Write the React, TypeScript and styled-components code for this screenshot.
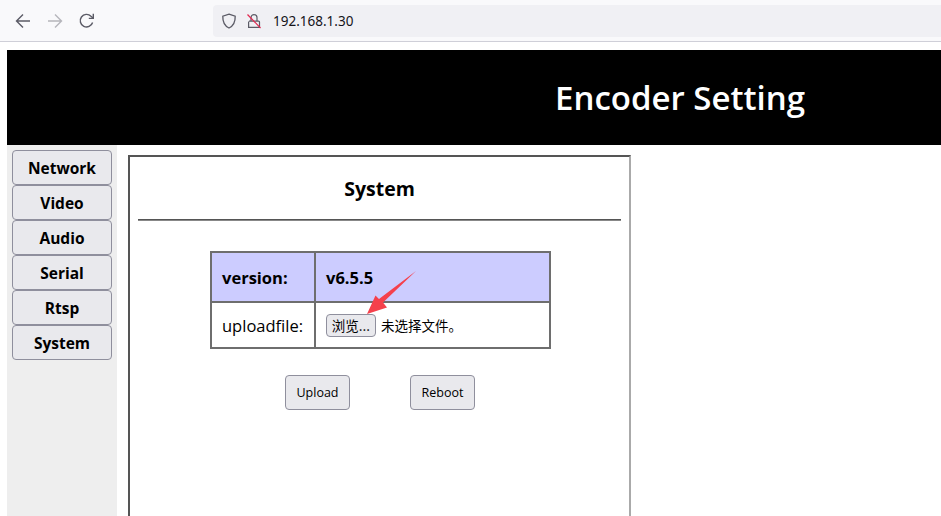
import styled, { createGlobalStyle } from 'styled-components'

const GlobalStyle = createGlobalStyle`
  html, body {
    margin: 0;
    padding: 0;
    height: 100%;
    background: #fff;
    overflow: hidden;
  }
  body {
    font-family: "Open Sans", "Noto Sans", "Noto Sans CJK SC", sans-serif;
    color: #000;
  }
`

const Window = styled.div`
  width: 941px;
  height: 516px;
  display: flex;
  flex-direction: column;
  overflow: hidden;
`

const Toolbar = styled.div`
  height: 41px;
  flex: none;
  box-sizing: content-box;
  display: flex;
  align-items: center;
  background: #f9f9fb;
  border-bottom: 1px solid #cfcfd8;
`

const NavIcons = styled.div`
  width: 213px;
  flex: none;
  display: flex;
  align-items: center;
  gap: 14px;
  padding-left: 14px;
  box-sizing: border-box;
`

const UrlBar = styled.div`
  flex: 1;
  height: 32px;
  display: flex;
  align-items: center;
  gap: 9px;
  padding-left: 8px;
  background: #f0f0f4;
  border-radius: 4px 0 0 4px;
`

const UrlText = styled.span`
  font-family: "Noto Sans", sans-serif;
  font-size: 13.5px;
  color: #15141a;
  margin-left: 2px;
`

const Page = styled.div`
  flex: 1;
  min-height: 0;
  padding: 8px 0 0 7px;
  display: flex;
  flex-direction: column;
`

const Banner = styled.header`
  height: 95px;
  flex: none;
  background: #000;
  display: flex;
  align-items: center;
  padding-left: 548px;
`

const BannerTitle = styled.h1`
  margin: 0;
  font-size: 33px;
  font-weight: 600;
  color: #fff;
  white-space: nowrap;
`

const Body = styled.div`
  flex: 1;
  min-height: 0;
  display: flex;
`

const Sidebar = styled.nav`
  width: 110px;
  flex: none;
  box-sizing: border-box;
  background: #eee;
  padding: 5px;
  display: flex;
  flex-direction: column;
`

const NavButton = styled.button`
  width: 100px;
  height: 35px;
  padding: 0;
  background: #e9e9ed;
  border: 1px solid #8f8f9d;
  border-radius: 4px;
  font-family: inherit;
  font-size: 15.5px;
  font-weight: 700;
  color: #000;
`

const Panel = styled.main`
  margin: 10px 0 0 11px;
  width: 503px;
  height: 400px;
  flex: none;
  box-sizing: border-box;
  border: 2px solid;
  border-color: #555 #aaa #aaa #555;
  padding: 0 8px;
  position: relative;
`

const PanelTitle = styled.h2`
  margin: 0;
  height: 62px;
  display: flex;
  align-items: center;
  justify-content: center;
  font-size: 19.5px;
  font-weight: 700;
`

const Rule = styled.div`
  height: 2px;
  background: linear-gradient(#555 50%, #888 50%);
  margin-bottom: 30px;
`

const InfoTable = styled.div`
  width: 341px;
  margin: 0 0 26px 72px;
  box-sizing: border-box;
  border: 2px solid;
  border-color: #6e6e6e;
  display: grid;
  grid-template-columns: 102px 1fr;
  grid-template-rows: 50px 44px;
`

const Cell = styled.div<{ $head?: boolean; $left?: boolean }>`
  display: flex;
  align-items: center;
  gap: 5px;
  padding-left: ${({ $left }) => ($left ? '10px' : '10px')};
  background: ${({ $head }) => ($head ? '#ccf' : '#fff')};
  font-size: 16.5px;
  font-weight: ${({ $head }) => ($head ? 700 : 400)};
  border-left: ${({ $left }) => ($left ? 'none' : '2px solid #6e6e6e')};
  border-bottom: ${({ $head }) => ($head ? '2px solid #6e6e6e' : 'none')};
`

const BrowseButton = styled.button`
  width: 50px;
  height: 23px;
  padding: 0;
  background: #e9e9ed;
  border: 1px solid #8f8f9d;
  border-radius: 4px;
  font-family: "Noto Sans CJK SC", sans-serif;
  font-size: 13.5px;
  color: #000;
`

const FileHint = styled.span`
  font-family: "Noto Sans CJK SC", sans-serif;
  font-size: 13.5px;
`

const Actions = styled.div`
  display: flex;
  gap: 60px;
  padding-left: 147px;
`

const ActionButton = styled.button`
  width: 65px;
  height: 35px;
  padding: 0;
  background: #e9e9ed;
  border: 1px solid #8f8f9d;
  border-radius: 4px;
  font-family: inherit;
  font-size: 12.5px;
  color: #000;
`

const Arrow = styled.svg`
  position: absolute;
  left: 236px;
  top: 112px;
  width: 52px;
  height: 48px;
`

const navItems = ['Network', 'Video', 'Audio', 'Serial', 'Rtsp', 'System']

export default function App() {
  return (
    <Window>
      <GlobalStyle />
      <Toolbar>
        <NavIcons>
          <svg width="18" height="18" viewBox="0 0 18 18" fill="none" stroke="#5b5b66" strokeWidth="1.4">
            <path d="M16 9H2.5M9 2.5 2.5 9 9 15.5" />
          </svg>
          <svg width="18" height="18" viewBox="0 0 18 18" fill="none" stroke="#b5b5bb" strokeWidth="1.4">
            <path d="M2 9h13.5M9 2.5 15.5 9 9 15.5" />
          </svg>
          <svg width="18" height="18" viewBox="0 0 18 18" fill="none" stroke="#5b5b66" strokeWidth="1.4">
            <path d="M14.6 10.5A6.3 6.3 0 1 1 13 4.2L15 6" />
            <path d="M15.3 1.8V6.4H10.8" />
          </svg>
        </NavIcons>
        <UrlBar>
          <svg width="16" height="16" viewBox="0 0 16 16" fill="none" stroke="#5b5b66" strokeWidth="1.3">
            <path d="M8 1.2 14.2 3.2C14.4 9 12.5 12.8 8 15 3.5 12.8 1.6 9 1.8 3.2Z" />
          </svg>
          <svg width="16" height="16" viewBox="0 0 16 16" fill="none" strokeWidth="1.2">
            <path d="M3 8.2h9.6c.5 0 .9.4.9.9v5.2H2.6V8.6M5 8V4.6a3 3 0 0 1 6 0V8" stroke="#5b5b66" />
            <path d="M1.5 1.5 14.5 15" stroke="#e22850" />
          </svg>
          <UrlText>192.168.1.30</UrlText>
        </UrlBar>
      </Toolbar>
      <Page>
        <Banner>
          <BannerTitle>Encoder Setting</BannerTitle>
        </Banner>
        <Body>
          <Sidebar>
            {navItems.map((item) => (
              <NavButton key={item}>{item}</NavButton>
            ))}
          </Sidebar>
          <Panel>
            <PanelTitle>System</PanelTitle>
            <Rule />
            <InfoTable>
              <Cell $head $left>version:</Cell>
              <Cell $head>v6.5.5</Cell>
              <Cell $left>uploadfile:</Cell>
              <Cell>
                <BrowseButton>浏览...</BrowseButton>
                <FileHint>未选择文件。</FileHint>
              </Cell>
            </InfoTable>
            <Actions>
              <ActionButton>Upload</ActionButton>
              <ActionButton>Reboot</ActionButton>
            </Actions>
            <Arrow viewBox="0 0 52 48">
              <path d="M50 2 17 33.5 21 38.5 1 45 9.5 26.5 13 30Z" fill="#f5404c" />
            </Arrow>
          </Panel>
        </Body>
      </Page>
    </Window>
  )
}
